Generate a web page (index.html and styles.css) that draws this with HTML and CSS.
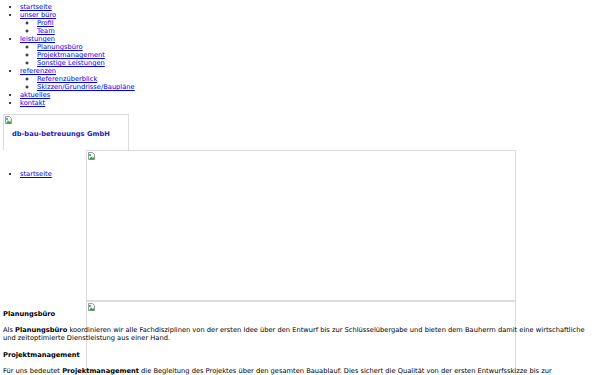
FILE: index.html
```html
<!DOCTYPE html>
<html lang="de">
<head>
    <meta charset="UTF-8">
    <title>db-bau-betreuungs GmbH</title>
    <link rel="stylesheet" href="styles.css">
</head>
<body>
    <ul class="menu">
        <li><a href="#">startseite</a></li>
        <li><a href="#">unser büro</a>
            <ul>
                <li><a href="#">Profil</a></li>
                <li><a href="#">Team</a></li>
            </ul>
        </li>
        <li><a href="#">leistungen</a>
            <ul>
                <li><a href="#">Planungsbüro</a></li>
                <li><a href="#">Projektmanagement</a></li>
                <li><a href="#">Sonstige Leistungen</a></li>
            </ul>
        </li>
        <li><a href="#">referenzen</a>
            <ul>
                <li><a href="#">Referenzüberblick</a></li>
                <li><a href="#">Skizzen/Grundrisse/Baupläne</a></li>
            </ul>
        </li>
        <li><a href="#">aktuelles</a></li>
        <li><a href="#">kontakt</a></li>
    </ul>

    <div class="logo">
        <svg class="broken" width="7" height="8" viewBox="0 0 7 8">
            <path d="M0.5 0.5h4l2 2v5h-6z" fill="#f4f4f4" stroke="#9a9a9a" stroke-width="1"/>
            <path d="M1 7.5l2-3 1.5 1.5 1-1 1 2.5z" fill="#3c9a3c"/>
            <rect x="1" y="2" width="2" height="2" fill="#6aa0d8"/>
        </svg>
        <span class="logo-text">db-bau-betreuungs GmbH</span>
    </div>

    <div class="row">
        <div class="side">
            <ul class="menu">
                <li><a href="#">startseite</a></li>
            </ul>
        </div>
        <div class="pic pic-top">
            <svg class="broken" width="7" height="8" viewBox="0 0 7 8">
                <path d="M0.5 0.5h4l2 2v5h-6z" fill="#f4f4f4" stroke="#9a9a9a" stroke-width="1"/>
                <path d="M1 7.5l2-3 1.5 1.5 1-1 1 2.5z" fill="#3c9a3c"/>
                <rect x="1" y="2" width="2" height="2" fill="#6aa0d8"/>
            </svg>
        </div>
    </div>

    <div class="content">
        <!-- second picture sits behind the text -->
        <div class="pic pic-under">
            <svg class="broken" width="7" height="8" viewBox="0 0 7 8">
                <path d="M0.5 0.5h4l2 2v5h-6z" fill="#f4f4f4" stroke="#9a9a9a" stroke-width="1"/>
                <path d="M1 7.5l2-3 1.5 1.5 1-1 1 2.5z" fill="#3c9a3c"/>
                <rect x="1" y="2" width="2" height="2" fill="#6aa0d8"/>
            </svg>
        </div>
        <h2>Planungsbüro</h2>
        <p>Als <b>Planungsbüro</b> koordinieren wir alle Fachdisziplinen von der ersten Idee über den Entwurf bis zur Schlüsselübergabe und bieten dem Bauherrn damit eine wirtschaftliche und zeitoptimierte Dienstleistung aus einer Hand.</p>
        <h2>Projektmanagement</h2>
        <p>Für uns bedeutet <b>Projektmanagement</b> die Begleitung des Projektes über den gesamten Bauablauf. Dies sichert die Qualität von der ersten Entwurfsskizze bis zur Schlüsselübergabe und garantiert die Einhaltung von Kosten und Terminen.</p>
    </div>
</body>
</html>
```

FILE: styles.css
```css
body {
    margin: 0;
    padding: 0 3px;
    font-family: "DejaVu Sans", Verdana, sans-serif;
    font-size: 6.7px;
    line-height: 8px;
    color: #000;
    background: #fff;
}

.menu {
    margin: 3px 0 0;
    padding-left: 17px;
}

.menu ul {
    margin: 0;
    padding-left: 17px;
}

a {
    color: #0000ee;
}

.logo {
    width: 124px;
    height: 35px;
    margin-top: 7px;
    border: 1px solid #dcdcdc;
    border-bottom: none;
}

.broken {
    display: block;
    margin: 1px 0 0 1px;
}

.logo-text {
    display: block;
    margin: 6px 0 0 8px;
    font-weight: bold;
    color: #2222bb;
}

.row {
    display: flex;
}

.side {
    width: 83px;
}

.side .menu {
    margin-top: 20px;
}

.pic {
    width: 428px;
    border: 1px solid #dcdcdc;
}

.pic-top {
    height: 149px;
}

.content {
    position: relative;
    padding-top: 9px;
}

.pic-under {
    position: absolute;
    top: 0;
    left: 83px;
    height: 120px;
    z-index: -1;
}

h2 {
    margin: 0;
    font-size: 6.7px;
    line-height: 8px;
}

p {
    margin: 8px 0;
}

p + h2 {
    margin-top: 9px;
}
```
